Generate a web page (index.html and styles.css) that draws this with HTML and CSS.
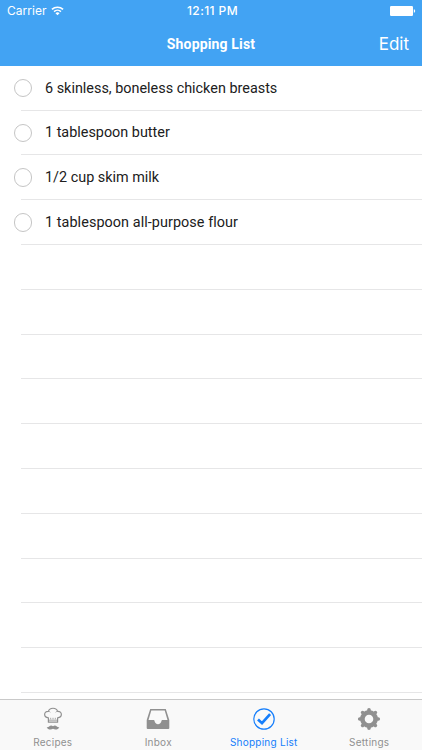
FILE: index.html
```
<!DOCTYPE html>
<html lang="en">
<head>
<meta charset="utf-8">
<title>Shopping List</title>
<link rel="stylesheet" href="styles.css">
</head>
<body>
<div class="app">
  <header class="header">
    <div class="status">
      <div class="carrier"><span>Carrier</span>
        <svg class="wifi" viewBox="0 0 14 10"><path d="M1 3.3a8.7 8.7 0 0 1 12 0M3.3 5.7a5.3 5.3 0 0 1 7.4 0" fill="none" stroke="currentColor" stroke-width="1.7"/><path d="M4.8 7.4a3.2 3.2 0 0 1 4.4 0L7 9.7z" fill="currentColor"/></svg>
      </div>
      <span class="time">12:11 PM</span>
      <svg class="battery" viewBox="0 0 26 10"><rect width="23" height="10" rx="1.2" fill="currentColor"/><path d="M23.8 3.2q1.4.3 1.4 1.8t-1.4 1.8z" fill="currentColor"/></svg>
    </div>
    <nav class="navbar"><span></span><h1 class="title">Shopping List</h1><span class="edit">Edit</span></nav>
  </header>
  <main class="list">
    <div class="row"><i class="check"></i><div class="cell"><span>6 skinless, boneless chicken breasts</span></div></div>
    <div class="row"><i class="check"></i><div class="cell"><span>1 tablespoon butter</span></div></div>
    <div class="row"><i class="check"></i><div class="cell"><span>1/2 cup skim milk</span></div></div>
    <div class="row"><i class="check"></i><div class="cell"><span class="wide">1 tablespoon all-purpose flour</span></div></div>
    <div class="row"><div class="cell"></div></div>
    <div class="row"><div class="cell"></div></div>
    <div class="row"><div class="cell"></div></div>
    <div class="row"><div class="cell"></div></div>
    <div class="row"><div class="cell"></div></div>
    <div class="row"><div class="cell"></div></div>
    <div class="row"><div class="cell"></div></div>
    <div class="row"><div class="cell"></div></div>
    <div class="row"><div class="cell"></div></div>
    <div class="row"><div class="cell"></div></div>
  </main>
  <footer class="tabs">
    <div class="tab">
      <svg viewBox="0 0 24 24"><path d="M7.4 15.200V10.800C2.300 10.500 2.500 4 7.400 4.300 8.500.2 15.500.2 16.600 4.300c4.900-.3 5.100 6.200 0 6.500v4.400z" fill="none" stroke="currentColor" stroke-width="1.200" stroke-linejoin="round"/><path d="M7.400 13.200h9.200M9.700 10.800v1.600M12 10.800v1.600M14.300 10.800v1.600M7.400 4.300q1.300.1 1.900 1M16.600 4.300q-1.300.1-1.900 1" fill="none" stroke="currentColor" stroke-width=".8"/><path d="M12 19.200c-1.600-1.300-3-.6-3.900.3-.7.700-1.500 1-2.400.7 1 2.700 4.800 2.800 6.300 1.500 1.500 1.300 5.300 1.200 6.300-1.500-.9.300-1.700 0-2.400-.7-.9-.9-2.300-1.600-3.900-.3z" fill="currentColor"/></svg>
      <span>Recipes</span>
    </div>
    <div class="tab">
      <svg viewBox="0 0 24 24"><path fill-rule="evenodd" d="M4.200 2h15.600l3.500 11V21q0 1-1 1H1.700q-1 0-1-1v-8zM5.300 3.400 2.500 13h5.300q.5 0 .7.800c.6 4.500 6.400 4.500 7 0q.2-.8.7-.8h5.300L18.700 3.400z" fill="currentColor"/></svg>
      <span>Inbox</span>
    </div>
    <div class="tab active">
      <svg viewBox="0 0 24 24"><circle cx="12" cy="12" r="10.200" fill="none" stroke="currentColor" stroke-width="1.200"/><path d="m6 12.500 4 3.700 8.100-9" fill="none" stroke="currentColor" stroke-width="2.700"/></svg>
      <span>Shopping List</span>
    </div>
    <div class="tab">
      <svg viewBox="0 0 24 24"><circle cx="12" cy="12" r="6.600" fill="none" stroke="currentColor" stroke-width="4.600"/><path d="M12 5V2.700M12 19v2.300M5 12H2.700M19 12h2.300M7 7 5.600 5.600M17 7l1.400-1.400M7 17l-1.400 1.400M17 17l1.400 1.400" stroke="currentColor" stroke-width="3.600" stroke-linecap="round"/></svg>
      <span>Settings</span>
    </div>
  </footer>
</div>
</body>
</html>
```
FILE: styles.css
```
* { box-sizing: border-box; }
body { margin: 0; background: #fff; font-family: Roboto, sans-serif; }
.app { width: 422px; height: 750px; display: flex; flex-direction: column; overflow: hidden; }
.header { height: 65.8px; flex: none; background: #42a3f3; color: #fff; }
.status { height: 22px; padding: 0 6px 0 7px; display: grid; grid-template-columns: 1fr auto 1fr; align-items: center; font-family: Inter, sans-serif; font-size: 12px; line-height: 22px; }
.carrier { display: flex; align-items: center; gap: 5px; letter-spacing: 0.02px; }
.wifi { width: 13px; height: 10px; }
.time { font-weight: 500; letter-spacing: 0.4px; margin-left: 2px; }
.battery { width: 26px; height: 10px; justify-self: end; }
.navbar { height: 43.8px; padding: 0 13px; display: grid; grid-template-columns: 1fr auto 1fr; align-items: center; }
.title { margin: 0; font-size: 14px; font-weight: 700; letter-spacing: 0.15px; }
.edit { justify-self: end; font-family: Inter, sans-serif; font-size: 17px; line-height: 20px; }
.list { height: 633.2px; flex: none; overflow: hidden; }
.row { height: 44.8px; padding-left: 21px; display: flex; position: relative; }
.cell { flex: 1; padding: 1px 0 0 24px; border-bottom: 1px solid #e6e6e7; display: flex; align-items: center; font-size: 14.4px; color: #202020; white-space: nowrap; }
.wide { letter-spacing: 0.07px; }
.check { position: absolute; left: 13.5px; top: 13px; width: 18.5px; height: 18.5px; border: 1px solid #c5c5c5; border-radius: 50%; }
.tabs { height: 51px; flex: none; display: grid; grid-template-columns: repeat(4, 1fr); background: #f9f9f9; border-top: 1px solid #c9c9c9; color: #909090; }
.tab { display: flex; flex-direction: column; align-items: center; padding-top: 7px; font-size: 10px; line-height: 13px; letter-spacing: 0.25px; white-space: nowrap; font-family: Inter, sans-serif; }
.tab svg { width: 24px; height: 24px; margin-bottom: 5px; }
.active { color: #157efb; }
```
